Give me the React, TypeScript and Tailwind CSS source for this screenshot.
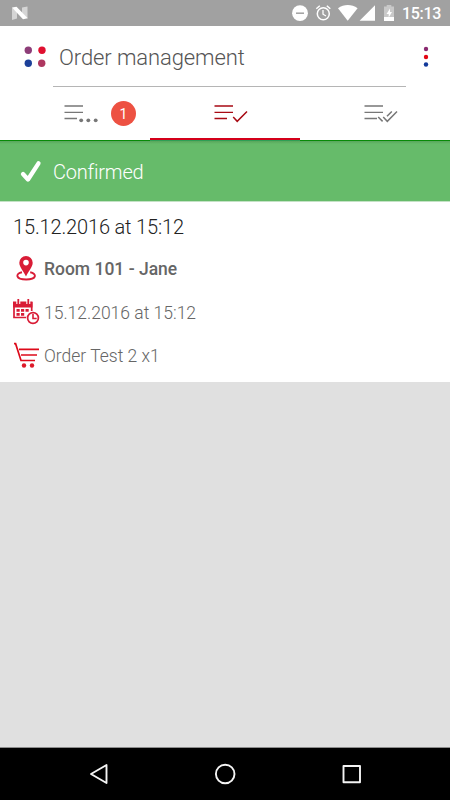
import React from 'react';

const StatusBar: React.FC = () => (
  <div className="flex h-[26px] shrink-0 items-center justify-between bg-[#a1a1a1]">
    <svg width="30" height="26" viewBox="0 0 30 26">
      <path d="M12 7.500l5 4.500v6.500l-5 1.500z" fill="#d5d5d5" />
      <path d="M22 7.500l5.500-1V18.500L22 13z" fill="#d5d5d5" />
      <path d="M12 7.500l4.500-.7L27.800 18.300l-4.800.9z" fill="#fff" />
    </svg>
    <div className="flex items-center">
      <svg width="122" height="26" viewBox="280 0 122 26">
        <circle cx="300" cy="13.200" r="7.900" fill="#fff" />
        <path d="M296 13.200h8" stroke="#a1a1a1" strokeWidth="1.500" />
        <g fill="none" stroke="#fff" strokeWidth="1.500">
          <circle cx="323.300" cy="13.700" r="6" />
          <path d="M323 10v4.200l3 1.800" strokeWidth="1.300" />
          <path d="M316.300 8.700l3.500-3M330.300 8.700l-3.500-3" />
        </g>
        <path d="M338 8.300c6-4.300 13.600-4.300 19.600 0L347.700 20.700z" fill="#fff" />
        <path d="M375 5.300v15.400h-15.400z" fill="#fff" />
        <path d="M384 6.500h2.700V5h4.600v1.500h2.700V17h-10z" fill="#c9c9c9" />
        <path d="M384 17h10v4h-10z" fill="#fff" />
        <path d="M390 8.500l-3.500 5.500h2.200v3.500l3.300-5.500h-2z" fill="#fff" />
      </svg>
      <span className="w-[48px] pt-px text-[16px] font-medium leading-[26px] tracking-[-0.3px] text-white">15:13</span>
    </div>
  </div>
);

const Header: React.FC = () => (
  <div className="flex h-[60px] items-center">
    <svg className="shrink-0" width="59" height="60" viewBox="0 26 59 60">
      <circle cx="28.300" cy="50.200" r="3.700" fill="#8d3d78" />
      <circle cx="42" cy="50.200" r="3.700" fill="#e01030" />
      <circle cx="28.300" cy="63.300" r="3.700" fill="#1c4099" />
      <circle cx="41.700" cy="63.300" r="3.700" fill="#ae3760" />
    </svg>
    <h1 className="flex-1 whitespace-nowrap pt-[3px] text-[22px] font-light leading-[30px] tracking-[-0.1px] text-[#555]">
      Order management
    </h1>
    <svg className="shrink-0" width="50" height="60" viewBox="400 26 50 60">
      <circle cx="426" cy="49" r="2.200" fill="#8a2a70" />
      <circle cx="426" cy="57" r="2.200" fill="#e30613" />
      <circle cx="426" cy="64.500" r="2.200" fill="#12399a" />
    </svg>
  </div>
);

const Tabs: React.FC = () => (
  <div className="flex h-[53px]">
    <div className="flex w-[150px] items-center">
      <svg width="111" height="53" viewBox="0 87 111 53">
        <path d="M64.500 106H83M64.500 112.400H83M64.500 118.500H77" stroke="#777" strokeWidth="1.300" />
        <g fill="#777">
          <circle cx="81.200" cy="120.300" r="1.900" />
          <circle cx="88.300" cy="120.300" r="1.900" />
          <circle cx="95.700" cy="120.300" r="1.900" />
        </g>
      </svg>
      <span className="flex h-[25px] w-[25px] items-center justify-center rounded-full bg-[#ed5142] text-[14px] leading-none text-white">
        1
      </span>
    </div>
    <div className="w-[150px] border-b-2 border-[#d4001a]">
      <svg width="150" height="51" viewBox="150 87 150 51">
        <path d="M214.500 106H233M214.500 112.400H233M214.500 118.500H227" stroke="#a80a14" strokeWidth="1.300" />
        <path d="M233.200 117l4 4.300L247 111.500" fill="none" stroke="#a80a14" strokeWidth="1.500" />
      </svg>
    </div>
    <div className="w-[150px]">
      <svg width="150" height="53" viewBox="300 87 150 53">
        <g fill="none" stroke="#777" strokeWidth="1.300">
          <path d="M364.500 106H383M364.500 112.400H383M364.500 118.500H377" />
          <path d="M378.200 117l4.400 4.400M383.200 117l4.100 4.300L397 111.500M387 116.300l4.800-4.800" strokeWidth="1.500" />
        </g>
      </svg>
    </div>
  </div>
);

const PinIcon: React.FC = () => (
  <svg className="shrink-0" width="44" height="43" viewBox="0 248 44 43">
    <path d="M22 272.300c-7 1.200-6.500 7.200 4.200 7.200s11-6 4-7.200" fill="none" stroke="#d91c36" strokeWidth="1.900" />
    <path fillRule="evenodd" d="M26 276.500c-2-4.700-6.700-9.300-6.700-13.700a6.700 6.700 0 0 1 13.400 0c0 4.400-4.700 9-6.700 13.700zM26 259.800a2.800 2.800 0 1 0 0 5.600 2.800 2.800 0 0 0 0-5.600z" fill="#d91c36" />
  </svg>
);

const CalendarIcon: React.FC = () => (
  <svg className="shrink-0" width="44" height="44" viewBox="0 291 44 44">
    <path d="M13 301.500h19.500v6H13z" fill="#d91c36" />
    <path d="M14 302v15.500h13M31.700 302v9" fill="none" stroke="#d91c36" strokeWidth="1.700" />
    <path d="M18.300 299v5M28.300 299v5" stroke="#fff" strokeWidth="4" />
    <path d="M18.300 299v5M28.300 299v5" stroke="#d91c36" strokeWidth="1.800" />
    <path d="M16.500 309h3.200v2.800h-3.200zM21 309h3.200v2.800h-3.200zM25.500 309h3.200v2.800h-3.200zM16.500 313h3.200v2.800h-3.200zM21 313h3.200v2.800h-3.200z" fill="#d91c36" />
    <circle cx="33" cy="318" r="7" fill="#fff" />
    <circle cx="33" cy="318" r="5.400" fill="none" stroke="#d91c36" strokeWidth="1.700" />
    <path d="M33 314v4.500h3.700" fill="none" stroke="#d91c36" strokeWidth="1.600" />
  </svg>
);

const CartIcon: React.FC = () => (
  <svg className="shrink-0" width="44" height="43" viewBox="0 335 44 43">
    <path d="M14 343.700h1.600L21 360.500h14M19 349.300h20M21 355h16" fill="none" stroke="#dd0a1a" strokeWidth="1.700" />
    <circle cx="24" cy="365.500" r="2.200" fill="#dd1a2a" />
    <circle cx="32" cy="365.500" r="2.200" fill="#dd1a2a" />
  </svg>
);

const OrderDetails: React.FC = () => (
  <div className="h-[180px] shrink-0 whitespace-nowrap bg-white">
    <div className="flex h-[46px] items-center pl-[13px] pt-[3px] text-[20px] font-light tracking-[-0.15px] text-[#222]">
      15.12.2016 at 15:12
    </div>
    <div className="flex h-[43px] items-center text-[17.500px] font-medium text-[#666]">
      <PinIcon />
      <span>Room 101 - Jane</span>
    </div>
    <div className="flex h-[44px] items-center text-[17.500px] font-light text-[#666]">
      <CalendarIcon />
      <span>15.12.2016 at 15:12</span>
    </div>
    <div className="flex h-[43px] items-center text-[17.500px] font-light text-[#666]">
      <CartIcon />
      <span className="pb-px">Order Test 2 x1</span>
    </div>
  </div>
);

const NavBar: React.FC = () => (
  <div className="h-[53px] shrink-0 border-t border-[#8c8c8c] bg-black">
    <svg width="450" height="52" viewBox="0 748 450 52" fill="none" stroke="#f4f4f4" strokeWidth="1.900" strokeLinejoin="round">
      <path d="M106.500 765v18L91 774z" />
      <circle cx="225.200" cy="774" r="9.300" />
      <path d="M343.500 766h16.500v16.300h-16.500z" />
    </svg>
  </div>
);

export default function App() {
  return (
    <div className="flex h-[800px] w-[450px] flex-col overflow-hidden bg-[#e0e0e0] font-[Roboto,sans-serif]">
      <StatusBar />
      <div className="h-[114px] shrink-0 bg-white">
        <Header />
        <div className="ml-[53px] -mb-px h-[1px] w-[353px] bg-[#b5b5b5]" />
        <div className="pt-px">
          <Tabs />
        </div>
      </div>
      <div className="flex h-[62px] shrink-0 flex-col border-b border-[#c4e2c5] bg-[#66bb6a]">
        <div className="flex h-px">
          <div className="w-[150px] bg-[#078a07]" />
          <div className="w-[150px] bg-[#2e9e55]" />
          <div className="w-[150px] bg-[#078a07]" />
        </div>
        <div className="h-[3px] bg-linear-to-b from-[#57a65b] to-[#66bb6a]" />
        <div className="flex flex-1 items-center">
          <svg className="shrink-0" width="53" height="56" viewBox="0 144 53 56">
            <path d="M23 173l5 5.500L38.500 162.300" fill="none" stroke="#fff" strokeWidth="4.300" strokeLinecap="round" strokeLinejoin="round" />
          </svg>
          <span className="pb-px text-[20px] font-light tracking-[-0.2px] text-white">Confirmed</span>
        </div>
      </div>
      <OrderDetails />
      <div className="flex-1" />
      <NavBar />
    </div>
  );
}
